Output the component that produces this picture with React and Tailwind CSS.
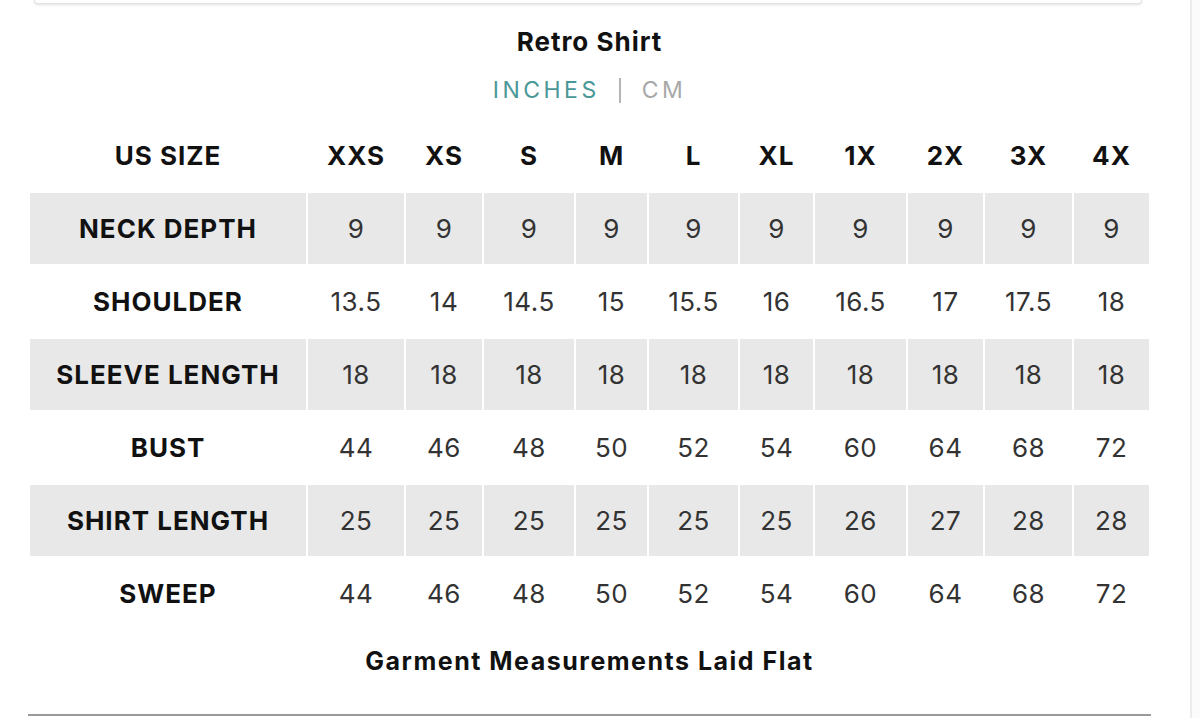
import React from "react";

const sizes = ["XXS", "XS", "S", "M", "L", "XL", "1X", "2X", "3X", "4X"];
const rows = [
  ["NECK DEPTH", ["9", "9", "9", "9", "9", "9", "9", "9", "9", "9"]],
  ["SHOULDER", ["13.5", "14", "14.5", "15", "15.5", "16", "16.5", "17", "17.5", "18"]],
  ["SLEEVE LENGTH", ["18", "18", "18", "18", "18", "18", "18", "18", "18", "18"]],
  ["BUST", ["44", "46", "48", "50", "52", "54", "60", "64", "68", "72"]],
  ["SHIRT LENGTH", ["25", "25", "25", "25", "25", "25", "26", "27", "28", "28"]],
  ["SWEEP", ["44", "46", "48", "50", "52", "54", "60", "64", "68", "72"]],
];

export default function App() {
  return (
    <div
      className="flex w-[1200px] h-[718px] overflow-hidden bg-white"
      style={{ fontFamily: "Inter, 'Liberation Sans', sans-serif" }}
    >
      <div className="w-[1190px] pl-[28px] flex flex-col">
        <div className="w-[1123px]">
          <div className="ml-[6px] w-[1108px] h-[4px] bg-white border-x border-b border-[#e2e2e2] rounded-b-[6px] shadow-[0_1px_3px_rgba(0,0,0,0.12)]" />
          <div className="mt-[22px] text-center text-[26px] leading-[32px] font-bold tracking-[1px] text-[#111]">
            Retro Shirt
          </div>
          <div className="mt-[16px] flex items-center justify-center text-[23px] leading-[32px] tracking-[3.5px]">
            <span className="text-[#4a9797]">INCHES</span>
            <span className="ml-[19px] mr-[21px] w-[2px] h-[25px] bg-[#b5b5b5]" />
            <span className="text-[#a8a8a8]">CM</span>
          </div>
          <div className="mt-[14px] ml-[2px] grid grid-cols-[276px_96px_76px_90px_71px_89px_73px_91px_75px_87px_75px] auto-rows-[71px] gap-[2px] text-[26px]">
            <div className="flex items-center justify-center font-bold tracking-[1px] text-[#111]">US SIZE</div>
            {sizes.map((s) => (
              <div key={s} className="flex items-center justify-center font-bold tracking-[1px] text-[#111]">
                {s}
              </div>
            ))}
            {rows.map(([label, vals], i) => (
              <React.Fragment key={label}>
                <div
                  className={`flex items-center justify-center font-bold tracking-[1px] text-[#111] ${
                    i % 2 === 0 ? "bg-[#e8e8e8]" : ""
                  }`}
                >
                  {label}
                </div>
                {vals.map((v, j) => (
                  <div
                    key={j}
                    className={`flex items-center justify-center tracking-[0.5px] text-[#333] ${
                      i % 2 === 0 ? "bg-[#e8e8e8]" : ""
                    }`}
                  >
                    {v}
                  </div>
                ))}
              </React.Fragment>
            ))}
          </div>
          <div className="mt-[16px] text-center text-[25px] leading-[32px] font-bold tracking-[1.5px] text-[#111]">
            Garment Measurements Laid Flat
          </div>
          <div className="mt-[37px] h-[2px] bg-[#9a9a9a]" />
        </div>
      </div>
      <div className="w-[10px] border-l-2 border-[#ececec] bg-[#fbfbfb]" />
    </div>
  );
}
